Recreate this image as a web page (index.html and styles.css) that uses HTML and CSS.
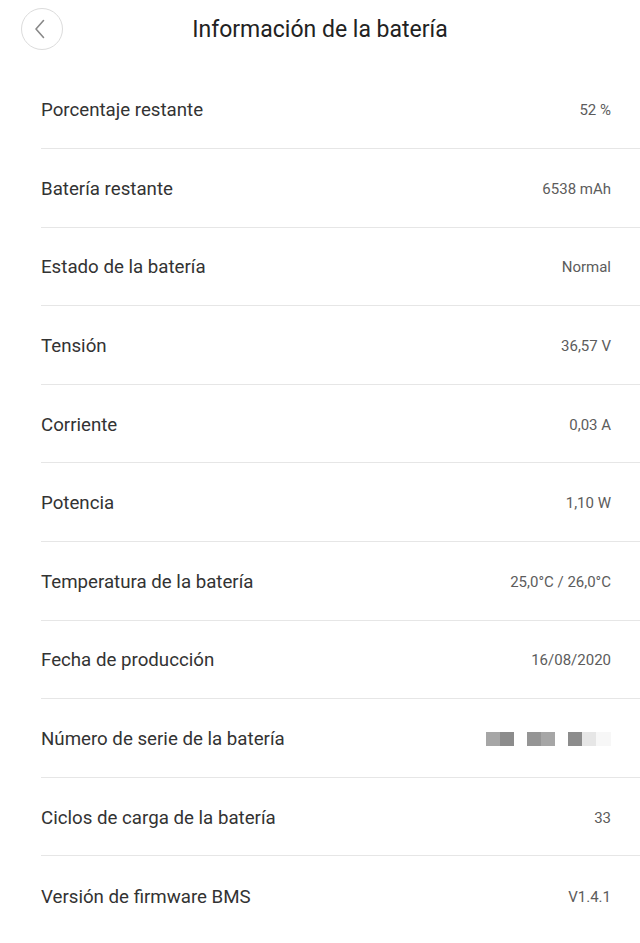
FILE: index.html
```html
<!DOCTYPE html>
<html lang="es">
<head>
	<meta charset="UTF-8">
	<meta name="viewport" content="width=device-width, initial-scale=1.0">
	<title>Información de la batería</title>
	<link rel="stylesheet" href="styles.css">
</head>
<body>
<div class="header">
	<a class="back" href="#">
		<svg width="12" height="20" viewBox="0 0 12 20"><polyline points="9.5,1.5 2,10 9.5,18.5" fill="none" stroke="#888" stroke-width="1.6" stroke-linecap="round" stroke-linejoin="round"/></svg>
	</a>
	<h1 class="title">Información de la batería</h1>
</div>
<ul class="list">
	<li><span class="label">Porcentaje restante</span><span class="value">52 %</span></li>
	<li><span class="label">Batería restante</span><span class="value">6538 mAh</span></li>
	<li><span class="label">Estado de la batería</span><span class="value">Normal</span></li>
	<li><span class="label">Tensión</span><span class="value">36,57 V</span></li>
	<li><span class="label">Corriente</span><span class="value">0,03 A</span></li>
	<li><span class="label">Potencia</span><span class="value">1,10 W</span></li>
	<li><span class="label">Temperatura de la batería</span><span class="value">25,0°C / 26,0°C</span></li>
	<li><span class="label">Fecha de producción</span><span class="value">16/08/2020</span></li>
	<li>
		<span class="label">Número de serie de la batería</span>
		<span class="blur">
			<i class="px c1"></i><i class="px c2"></i><i class="gap"></i>
			<i class="px c3"></i><i class="px c1"></i><i class="gap"></i>
			<i class="px c2"></i><i class="px c4"></i><i class="px c5"></i>
		</span>
	</li>
	<li><span class="label">Ciclos de carga de la batería</span><span class="value">33</span></li>
	<li><span class="label">Versión de firmware BMS</span><span class="value">V1.4.1</span></li>
</ul>
</body>
</html>
```
FILE: styles.css
```css
html,body{margin:0;padding:0;background:#fff;}
body{font-family:Roboto,"Noto Sans",sans-serif;color:#333;}
ul{list-style-type:none;margin:0;padding:0;}

.header{position:relative;height:70.4px;display:flex;align-items:center;justify-content:center;}
.back{position:absolute;left:21px;top:8px;width:40px;height:40px;border:1px solid #dcdcdc;border-radius:50%;display:flex;align-items:center;justify-content:center;}
.back svg{margin-left:-4px;}
.title{margin:0;margin-top:-11px;font-size:23px;font-weight:400;color:#222;}

.list{padding-left:41px;}
.list li{height:78.6px;box-sizing:border-box;display:flex;align-items:center;justify-content:space-between;padding:2px 29px 0 0;border-bottom:1.5px solid #e6e6e6;}
.list li:last-child{border-bottom:none;}
.label{font-size:18.7px;color:#333;}
.value{font-size:15px;color:#5c5c5c;}

.blur{display:flex;}
.blur i{display:block;height:14px;}
.px{width:14px;}
.gap{width:13px;}
.c1{background:#a6a6a6;}
.c2{background:#8c8c8c;}
.c3{background:#959595;}
.c4{background:#e6e6e6;}
.c5{background:#f7f7f7;width:15px;}
```
